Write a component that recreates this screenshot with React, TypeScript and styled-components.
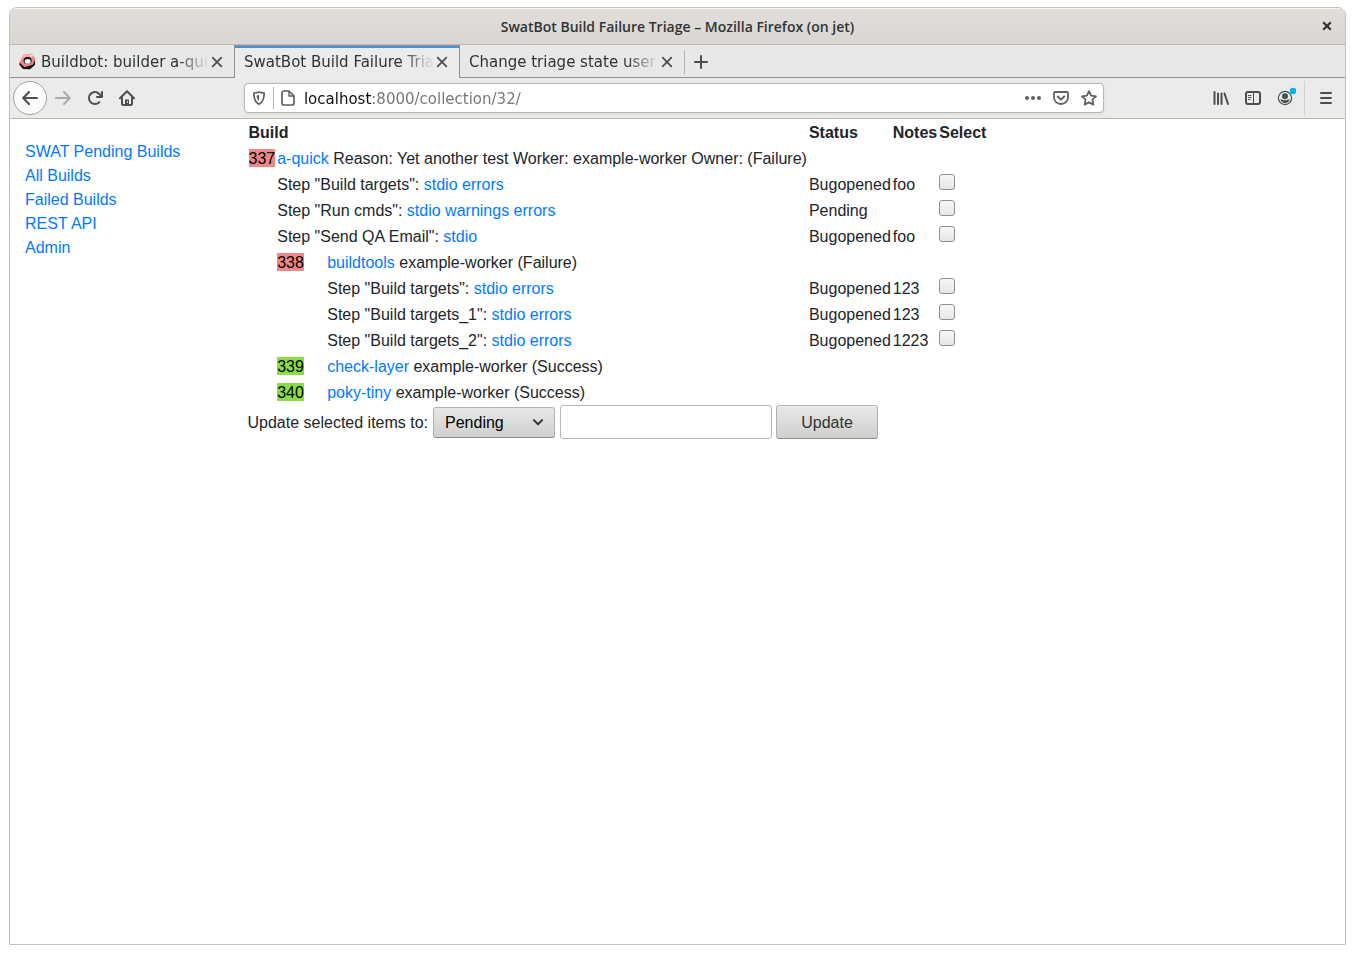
import React from "react";
import styled, { createGlobalStyle, css } from "styled-components";

const GlobalStyle = createGlobalStyle`
  *, *::before, *::after { box-sizing: border-box; }
  body { margin: 0; background: #fff; }
  button, input, select { margin: 0; font: inherit; }
`;

const Window = styled.div`
  display: flex;
  flex-direction: column;
  min-height: calc(100vh - 16px);
  margin: 7px 9px 9px;
  border: 1px solid #c1c1c1;
  border-radius: 8px 8px 0 0;
  overflow: hidden;
  background: #fff;
`;

const TitleBar = styled.header`
  display: grid;
  grid-template-columns: 36px 1fr 36px;
  align-items: center;
  height: 37px;
  border-bottom: 1px solid #bfb8b1;
  background: linear-gradient(#e1dedb, #dad6d1);
  box-shadow: inset 0 1px #f4f3f2;
`;

const WindowTitle = styled.h1`
  grid-column: 2;
  margin: 0;
  padding-top: 1px;
  color: #2e3436;
  font: 600 14px/20px "Open Sans", "Noto Sans", sans-serif;
  text-align: center;
  white-space: nowrap;
`;

const GhostButton = styled.button<{ $width: number; $muted?: boolean }>`
  display: flex;
  flex: none;
  align-items: center;
  justify-content: center;
  width: ${(p) => p.$width}px;
  height: 28px;
  padding: 0;
  border: 0;
  background: none;
  color: ${(p) => (p.$muted ? "#a9abab" : "#4a4f51")};
`;

const TabStrip = styled.nav`
  display: flex;
  height: 33px;
  background: #e8e8e7;
  color: #2e3436;
  font: 15px/20px "DejaVu Sans", sans-serif;
`;

const Tab = styled.div<{ $active?: boolean }>`
  display: flex;
  flex: 0 1 ${(p) => (p.$active ? 226 : 224)}px;
  min-width: 0;
  align-items: center;
  padding: 0 9px;
  ${(p) =>
    p.$active
      ? css`
          border: solid #929290;
          border-width: 0 1px;
          background: linear-gradient(#929290 1px, #4a90d9 1px, #4a90d9 3px, #ebebea 3px);
        `
      : css`
          box-shadow: inset 0 -1px #929290;
        `}
`;

const TabLabel = styled.span`
  flex: 1;
  min-width: 0;
  overflow: hidden;
  white-space: nowrap;
  mask-image: linear-gradient(to left, transparent, #000 32px);
`;

const TabStripRest = styled.div`
  display: flex;
  flex: 1;
  align-items: center;
  box-shadow: inset 0 -1px #929290;
`;

const Divider = styled.span<{ $height: number; $light?: boolean }>`
  flex: none;
  width: 1px;
  height: ${(p) => p.$height}px;
  background: ${(p) => (p.$light ? "#d0d0ce" : "#b4b4b2")};
`;

const Toolbar = styled.div`
  display: flex;
  align-items: center;
  height: 41px;
  padding-left: 3px;
  border-bottom: 1px solid #b9b8b1;
  background: #ebebea;
`;

const BackButton = styled(GhostButton)`
  height: 34px;
  border: 1px solid #a3a3a1;
  border-radius: 50%;
  background: #fbfbfb;
`;

const Spring = styled.span`
  flex: 2;
`;

const UrlBar = styled.div`
  display: flex;
  flex: 17;
  align-items: center;
  height: 30px;
  border: 1px solid #b6b6b3;
  border-radius: 4px;
  background: #fff;
  box-shadow: 0 1px 4px rgba(0, 0, 0, 0.06);

  > button {
    color: #5f5f60;
  }
`;

/* The host name is painted darker than the rest of the address. */
const UrlInput = styled.input`
  flex: 1;
  min-width: 0;
  height: 28px;
  padding: 2px 2px 0;
  border: 0;
  outline: 0;
  background: linear-gradient(90deg, #0c0c0d 71px, #737373 71px);
  background-clip: text;
  color: #737373;
  -webkit-text-fill-color: transparent;
  font: 15px/20px "DejaVu Sans", sans-serif;
`;

const MenuArea = styled.div`
  display: flex;
  align-items: center;
  margin-left: 3px;

  > button {
    padding-left: 2px;
  }
`;

const Page = styled.div`
  display: grid;
  grid-template-columns: minmax(0, 1fr) minmax(0, 5fr);
  color: #212529;
  font: 16px/24px "Liberation Sans", Arial, sans-serif;
`;

const Link = styled.a`
  color: #007bff;
  text-decoration: none;
`;

const SideNav = styled.nav`
  display: flex;
  flex-direction: column;
  align-items: flex-start;
  padding: 21px 15px;
  white-space: nowrap;
`;

const Content = styled.main`
  padding: 0 15px;
`;

const BuildTable = styled.table`
  border-collapse: collapse;
  white-space: nowrap;

  th,
  td {
    padding: 2px 1px 0;
    text-align: left;
    vertical-align: top;
  }
`;

const IndentCol = styled.col`
  width: 50px;
`;

const BuildId = styled.span<{ $ok?: boolean }>`
  padding-top: 1px;
  background: ${(p) => (p.$ok ? "#88dd44" : "#ee8888")};
  color: #000;
`;

const CheckBox = styled.input`
  display: block;
  appearance: none;
  width: 16px;
  height: 16px;
  margin-top: 1px;
  border: 1px solid #92928d;
  border-radius: 3px;
  background: linear-gradient(#f7f7f7, #e6e6e5);
`;

const UpdateForm = styled.form`
  display: flex;
  align-items: center;
  gap: 4px;
  white-space: nowrap;
`;

const FormLabel = styled.label`
  padding-top: 2px;
`;

const SelectBox = styled.span`
  display: grid;
  align-items: center;
  margin: 0 1px;

  > * {
    grid-area: 1 / 1;
  }
  > svg {
    justify-self: end;
    margin-right: 11px;
    pointer-events: none;
  }
`;

const StateSelect = styled.select`
  appearance: none;
  width: 122px;
  height: 31px;
  padding: 1px 11px 0;
  border: 1px solid #b0b0ad;
  border-bottom-color: #8f8f8a;
  border-radius: 3px;
  background: linear-gradient(#e8e8e7, #cfcfcd);
  color: #000;
`;

const NoteInput = styled.input`
  width: 212px;
  height: 34px;
  padding: 0 8px;
  border: 1px solid #b6b6b3;
  border-radius: 3px;
  background: #fff;
`;

const UpdateButton = styled.button`
  width: 102px;
  height: 34px;
  padding: 2px 0 0;
  border: 1px solid #b0b0ad;
  border-bottom-color: #8f8f8a;
  border-radius: 3px;
  background: linear-gradient(#e8e8e7, #cfcfcd);
  box-shadow: inset 0 1px #f4f4f4;
  color: #2e3436;
`;

const Icon = ({ children, size = 16, box = 16 }: { children: React.ReactNode; size?: number; box?: number }) => (
  <svg
    width={size}
    height={size}
    viewBox={`0 0 ${box} ${box}`}
    fill="none"
    stroke="currentColor"
    strokeWidth="2"
    strokeLinecap="round"
    strokeLinejoin="round"
    aria-hidden="true"
  >
    {children}
  </svg>
);

const CloseIcon = () => (
  <Icon>
    <path d="M3.7 3.7l8.6 8.6M12.3 3.7l-8.6 8.6" strokeWidth="1.8" />
  </Icon>
);

const TabLogo = styled.svg`
  flex: none;
  margin-right: 5px;
`;

const NutLogo = () => (
  <TabLogo width="17" height="17" viewBox="0 0 17 17" aria-hidden="true">
    <path d="M.5 9.500v2.500l3.500 4 7 .300 5-4.300V7z" fill="#111" />
    <path d="M4.500 1.800L12 .8l4.500 4.700-2.500 6-8.500 2.800L.5 9.500z" fill="#f08585" />
    <path d="M4.500 1.800L12 .8l2 2.200-8 1.200-3 4z" fill="#f7a9a9" />
    <circle cx="12.300" cy="3" r="1" fill="#fff" />
    <ellipse cx="8.600" cy="7.600" rx="4.100" ry="3.500" fill="#161616" />
    <ellipse cx="8.700" cy="8.400" rx="3" ry="2.400" fill="#f4f4f4" />
  </TabLogo>
);

type Build = { kind: "build"; level: 0 | 1; id: string; name: string; text: string; ok?: boolean };
type Step = { kind: "step"; level: 0 | 1; name: string; links: string[]; status: string; notes: string };

const rows: (Build | Step)[] = [
  { kind: "build", level: 0, id: "337", name: "a-quick", text: "Reason: Yet another test Worker: example-worker Owner: (Failure)" },
  { kind: "step", level: 0, name: "Build targets", links: ["stdio", "errors"], status: "Bugopened", notes: "foo" },
  { kind: "step", level: 0, name: "Run cmds", links: ["stdio", "warnings", "errors"], status: "Pending", notes: "" },
  { kind: "step", level: 0, name: "Send QA Email", links: ["stdio"], status: "Bugopened", notes: "foo" },
  { kind: "build", level: 1, id: "338", name: "buildtools", text: "example-worker (Failure)" },
  { kind: "step", level: 1, name: "Build targets", links: ["stdio", "errors"], status: "Bugopened", notes: "123" },
  { kind: "step", level: 1, name: "Build targets_1", links: ["stdio", "errors"], status: "Bugopened", notes: "123" },
  { kind: "step", level: 1, name: "Build targets_2", links: ["stdio", "errors"], status: "Bugopened", notes: "1223" },
  { kind: "build", level: 1, id: "339", name: "check-layer", text: "example-worker (Success)", ok: true },
  { kind: "build", level: 1, id: "340", name: "poky-tiny", text: "example-worker (Success)", ok: true },
];

const BuildRow = ({ row }: { row: Build }) => (
  <tr>
    {row.level === 1 && <td />}
    <td>
      <BuildId $ok={row.ok}>{row.id}</BuildId>
    </td>
    <td colSpan={row.level === 0 ? 2 : 1}>
      <Link href="#build">{row.name}</Link> {row.text}
    </td>
    <td colSpan={3} />
  </tr>
);

const StepRow = ({ row }: { row: Step }) => (
  <tr>
    <td colSpan={row.level + 1} />
    <td colSpan={2 - row.level}>
      Step "{row.name}":
      {row.links.map((link) => (
        <React.Fragment key={link}>
          {" "}
          <Link href="#log">{link}</Link>
        </React.Fragment>
      ))}
    </td>
    <td>{row.status}</td>
    <td>{row.notes}</td>
    <td>
      <CheckBox type="checkbox" aria-label={`Select ${row.name}`} />
    </td>
  </tr>
);

const navLinks = ["SWAT Pending Builds", "All Builds", "Failed Builds", "REST API", "Admin"];

export default function App() {
  return (
    <>
      <GlobalStyle />
      <Window>
        <TitleBar>
          <WindowTitle>SwatBot Build Failure Triage – Mozilla Firefox (on jet)</WindowTitle>
          <GhostButton $width={36} aria-label="Close window">
            <Icon>
              <path d="M4.200 4.200l7.600 7.600M11.800 4.200l-7.600 7.600" stroke="#2e3436" strokeWidth="2.200" strokeLinecap="butt" />
            </Icon>
          </GhostButton>
        </TitleBar>

        <TabStrip aria-label="Tabs">
          <Tab>
            <NutLogo />
            <TabLabel>Buildbot: builder a-qui</TabLabel>
            <GhostButton $width={16} aria-label="Close tab"><CloseIcon /></GhostButton>
          </Tab>
          <Tab $active>
            <TabLabel>SwatBot Build Failure Tria</TabLabel>
            <GhostButton $width={16} aria-label="Close tab"><CloseIcon /></GhostButton>
          </Tab>
          <Tab>
            <TabLabel>Change triage state user</TabLabel>
            <GhostButton $width={16} aria-label="Close tab"><CloseIcon /></GhostButton>
          </Tab>
          <TabStripRest>
            <Divider $height={24} />
            <GhostButton $width={32} aria-label="New tab">
              <Icon>
                <path d="M8 2v12M2 8h12" />
              </Icon>
            </GhostButton>
          </TabStripRest>
        </TabStrip>

        <Toolbar>
          <BackButton $width={34} aria-label="Back">
            <Icon>
              <path d="M15 8H1.500M7 2L1.200 8 7 14" />
            </Icon>
          </BackButton>
          <GhostButton $width={32} $muted aria-label="Forward">
            <Icon>
              <path d="M1 8h13.500M9 2l5.800 6L9 14" />
            </Icon>
          </GhostButton>
          <GhostButton $width={32} aria-label="Reload">
            <Icon>
              <path
                d="M15 1a1 1 0 0 0-1 1v2.418A6.995 6.995 0 1 0 8 15a6.954 6.954 0 0 0 4.950-2.050 1 1 0 0 0-1.414-1.414A5.019 5.019 0 1 1 12.549 6H10a1 1 0 0 0 0 2h5a1 1 0 0 0 1-1V2a1 1 0 0 0-1-1z"
                fill="currentColor"
                stroke="none"
              />
            </Icon>
          </GhostButton>
          <GhostButton $width={32} aria-label="Home">
            <Icon>
              <path d="M1 8.200L8 1.200l7 7M3 8v5.500a1.500 1.500 0 0 0 1.500 1.500h7a1.500 1.500 0 0 0 1.500-1.500V8" />
              <path d="M6 15V9.500h4V15z" fill="currentColor" stroke="none" />
              <path d="M8.500 11.500v1" stroke="#ebebea" strokeWidth="1" />
            </Icon>
          </GhostButton>
          <Spring />
          <UrlBar>
            <GhostButton $width={28} aria-label="Tracking protection">
              <Icon>
                <path d="M8 2c2 .8 3.800.9 5.200 1 0 5.500-1 9-5.200 11.200C3.800 12 2.800 8.500 2.800 3 4.200 2.900 6 2.800 8 2z" strokeWidth="1.700" />
                <path d="M8 5v6.300C6.300 9.700 5.700 8 5.600 5.500 6.400 5.400 7.200 5.300 8 5z" fill="currentColor" stroke="none" />
              </Icon>
            </GhostButton>
            <Divider $height={22} />
            <GhostButton $width={28} aria-label="Site information">
              <Icon>
                <path d="M4 1h5l5 5v7a2 2 0 0 1-2 2H4a2 2 0 0 1-2-2V3a2 2 0 0 1 2-2z" strokeWidth="1.700" />
                <path d="M9 1.500V6h4.500" strokeWidth="1.400" />
              </Icon>
            </GhostButton>
            <UrlInput aria-label="Address" defaultValue="localhost:8000/collection/32/" spellCheck={false} />
            <GhostButton $width={28} aria-label="Page actions">
              <Icon>
                <g fill="currentColor" stroke="none">
                  <circle cx="2" cy="8" r="2" />
                  <circle cx="8" cy="8" r="2" />
                  <circle cx="14" cy="8" r="2" />
                </g>
              </Icon>
            </GhostButton>
            <GhostButton $width={28} aria-label="Save to Pocket">
              <Icon>
                <path d="M2 2h12a1 1 0 0 1 1 1v4.500a7 6.500 0 0 1-14 0V3a1 1 0 0 1 1-1z" strokeWidth="1.800" />
                <path d="M4.800 6.500L8 9.600l3.200-3.100" />
              </Icon>
            </GhostButton>
            <GhostButton $width={28} aria-label="Bookmark">
              <Icon>
                <path d="M8 1.200l2.100 4.500 4.900.6-3.600 3.400.9 4.900L8 12.200l-4.300 2.400.9-4.900L1 6.300l4.900-.6z" strokeWidth="1.800" />
              </Icon>
            </GhostButton>
          </UrlBar>
          <Spring />
          <GhostButton $width={32} aria-label="Library">
            <Icon>
              <path d="M1.500 2v12M5 3.500v10.500M8.500 3.500v10.500M11.500 3.500l3.500 10.500" strokeWidth="2" />
            </Icon>
          </GhostButton>
          <GhostButton $width={32} aria-label="Sidebars">
            <Icon>
              <rect x="1" y="2" width="14" height="12" rx="2" />
              <path d="M8.500 2.500v11" strokeWidth="1" />
              <path d="M3.500 5.500h2.500M3.500 7.500h2.500M3.500 9.500h1.500" strokeWidth="1" />
            </Icon>
          </GhostButton>
          <GhostButton $width={32} aria-label="Account">
            <Icon size={24} box={24}>
              <circle cx="12" cy="12" r="6.600" strokeWidth="1.200" />
              <circle cx="12" cy="10.300" r="3" fill="currentColor" stroke="none" />
              <path d="M7.300 13.300c1.700 0 2.200 1 4.700 1s3-1 4.700-1c-.4 2.200-2.500 3.900-4.700 3.900s-4.300-1.700-4.700-3.900z" fill="currentColor" stroke="none" />
              <circle cx="20" cy="5" r="3.200" fill="#00b3f4" stroke="none" />
            </Icon>
          </GhostButton>
          <MenuArea>
            <Divider $height={34} $light />
            <GhostButton $width={40} aria-label="Open menu">
              <Icon>
                <path d="M3 3h10M3 8h10M3 13h10" />
              </Icon>
            </GhostButton>
          </MenuArea>
        </Toolbar>

        <Page>
          <SideNav aria-label="Site">
            {navLinks.map((name) => (
              <Link key={name} href="#page">{name}</Link>
            ))}
          </SideNav>
          <Content>
            <BuildTable>
              <colgroup>
                <col />
                <IndentCol />
                <col span={4} />
              </colgroup>
              <thead>
                <tr>
                  <th colSpan={3}>Build</th>
                  <th>Status</th>
                  <th>Notes</th>
                  <th>Select</th>
                </tr>
              </thead>
              <tbody>
                {rows.map((row, i) =>
                  row.kind === "build" ? <BuildRow key={i} row={row} /> : <StepRow key={i} row={row} />
                )}
              </tbody>
            </BuildTable>
            <UpdateForm onSubmit={(e) => e.preventDefault()}>
              <FormLabel htmlFor="state">Update selected items to:</FormLabel>
              <SelectBox>
                <StateSelect id="state" defaultValue="Pending">
                  <option>Pending</option>
                  <option>Bugopened</option>
                </StateSelect>
                <Icon size={12}>
                  <path d="M2.500 5.500L8 11l5.500-5.500" stroke="#2e3436" strokeWidth="2.600" />
                </Icon>
              </SelectBox>
              <NoteInput type="text" aria-label="Notes" />
              <UpdateButton type="submit">Update</UpdateButton>
            </UpdateForm>
          </Content>
        </Page>
      </Window>
    </>
  );
}
